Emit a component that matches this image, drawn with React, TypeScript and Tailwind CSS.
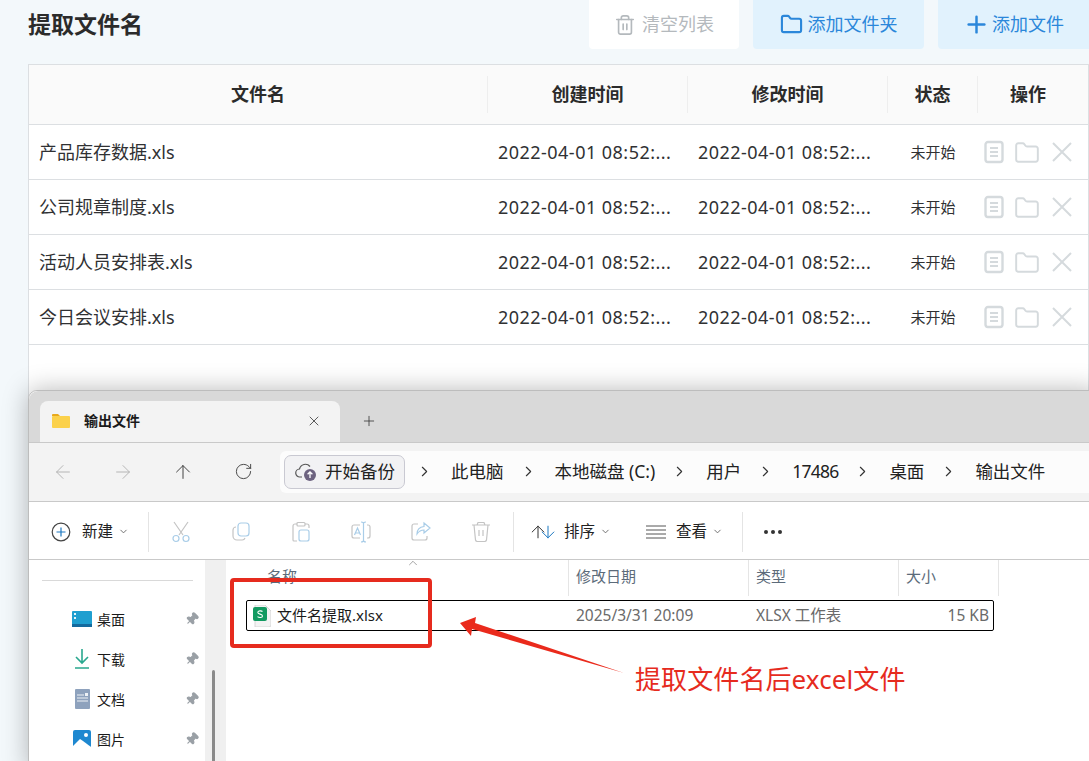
import { ArrowDown, ArrowLeft, ArrowRight, ArrowUp, ChevronDown, ChevronRight, ChevronUp, Folder, Pin, Plus, RotateCw, Trash2, X } from "lucide-react";

const FONT = "font-['Noto_Sans','Noto_Sans_CJK_SC',sans-serif]";

const rows = ["产品库存数据.xls", "公司规章制度.xls", "活动人员安排表.xls", "今日会议安排.xls"];
const crumbs = ["此电脑", "本地磁盘 (C:)", "用户", "17486", "桌面", "输出文件"];

function DocIcon() {
  return (
    <svg width="20" height="24" viewBox="0 0 20 24" fill="none" stroke="#d5dadd" strokeWidth="2.4">
      <rect x="1.5" y="2" width="17" height="20" rx="2.5" />
      <path d="M6 8h8M6 12h8M6 16h8" strokeWidth="1.8" />
    </svg>
  );
}

function TableRow({ name }: { name: string }) {
  return (
    <div className="grid h-[55px] grid-cols-[459px_200px_200px_90px_112px] items-center border-b border-[#dcdfe2] bg-white text-[18px] text-[#303133]">
      <div className="pl-[10px]">{name}</div>
      <div className="pl-[10px] tracking-[0.47px]">2022-04-01 08:52:...</div>
      <div className="pl-[10px] tracking-[0.47px]">2022-04-01 08:52:...</div>
      <div className="text-center text-[15px]">未开始</div>
      <div className="flex items-center pl-[6px]">
        <DocIcon />
        <Folder size={26} strokeWidth={1.8} color="#d5dadd" className="ml-[10px] mt-[1px]" />
        <svg width="20" height="20" viewBox="0 0 20 20" stroke="#d5dadd" strokeWidth="2" className="ml-[12px]">
          <path d="M1 1l18 18M19 1L1 19" />
        </svg>
      </div>
    </div>
  );
}

function HeadCell({ label, border = true }: { label: string; border?: boolean }) {
  return (
    <div className={`flex h-[37px] items-center justify-center text-[18px] font-bold text-[#2b2b2b] ${border ? "border-r border-[#eeeeee]" : "pr-[12px]"}`}>
      {label}
    </div>
  );
}

function Backup() {
  return (
    <div className="-mr-[5px] flex h-[34px] w-[121px] items-center gap-[6px] rounded-[7px] border border-[#c9c9d2] bg-[#f2f2f4] pl-[10px] text-[17.5px] text-[#222]">
      <svg width="24" height="22" viewBox="0 0 24 22" fill="none">
        <path d="M7 16H5a4 4 0 0 1-.5-8A6 6 0 0 1 15 5.5" stroke="#555" strokeWidth="1.2" />
        <circle cx="15" cy="14" r="6" fill="#6d6380" />
        <path d="M15 17v-6M12.6 13.2 15 11l2.4 2.2" stroke="#fff" strokeWidth="1.3" />
      </svg>
      开始备份
    </div>
  );
}

function ToolIcon({ children }: { children: React.ReactNode }) {
  return (
    <div className="flex w-[60px] justify-center">
      <svg width="22" height="22" viewBox="0 0 22 22" fill="none" strokeWidth="1.2">
        {children}
      </svg>
    </div>
  );
}

function Divider() {
  return <div className="h-[40px] w-px bg-[#e4e4e4]" />;
}

function SideItem({ icon, label }: { icon: React.ReactNode; label: string }) {
  return (
    <div className="flex h-[40px] items-center pl-[43px] text-[14px] text-[#1a1a1a]">
      <div className="flex w-[20px] justify-center">{icon}</div>
      <span className="ml-[5px] w-[88px]">{label}</span>
      <Pin size={14} fill="#9aa0a6" color="#9aa0a6" className="rotate-45" />
    </div>
  );
}

function Explorer() {
  return (
    <div className="absolute left-[28px] top-[390px] flex h-[380px] w-[1070px] flex-col rounded-tl-[9px] border border-[#bdbdbd] bg-white shadow-[0_0_26px_rgba(0,0,0,0.28)]">
      {/* tab strip */}
      <div className="flex h-[52px] items-end rounded-tl-[9px] border-b border-[#c9c9c9] bg-[#d9d9d9] pl-[11px]">
        <div className="flex h-[41px] w-[300px] items-center rounded-t-[8px] bg-[#f3f3f3] pb-[2px] pl-[12px] pr-[18px] text-[14px] font-bold text-[#1a1a1a]">
          <svg width="18" height="16" viewBox="0 0 18 16">
            <path d="M0 2a1 1 0 0 1 1-1h5l2 2H0z" fill="#e8a91c" />
            <rect y="3" width="18" height="12" rx="1" fill="#fbd14b" />
          </svg>
          <span className="ml-[14px] flex-1">输出文件</span>
          <X size={16} strokeWidth={1.2} color="#333" />
        </div>
        <Plus size={16} strokeWidth={1.2} color="#333" className="mb-[13px] ml-[21px]" />
      </div>

      {/* nav and address bar */}
      <div className="flex h-[59px] items-center border-b border-[#c9c9c9] bg-[#f3f3f3] pb-[1px] pl-[23px]">
        <ArrowLeft size={22} strokeWidth={1} color="#b0b0b0" />
        <ArrowRight size={22} strokeWidth={1} color="#b0b0b0" className="ml-[38px]" />
        <ArrowUp size={22} strokeWidth={1} color="#333" className="ml-[38px]" />
        <RotateCw size={19} strokeWidth={1.1} color="#333" className="ml-[40px]" />
        <div className="ml-[27px] flex h-[42px] flex-1 items-center rounded-l-[6px] bg-[#fcfcfc] pl-[4px] text-[17.5px] text-[#222]">
          <Backup />
          {crumbs.map((c) => (
            <div key={c} className="flex items-center">
              <ChevronRight size={17} strokeWidth={1.6} color="#333" className="ml-[16px] mr-[18px] shrink-0" />
              <span className={`whitespace-nowrap ${c === "17486" ? "tracking-[-0.8px]" : ""}`}>{c}</span>
            </div>
          ))}
        </div>
      </div>

      {/* command bar */}
      <div className="flex h-[58px] items-center border-b border-[#c9c9c9] bg-white pl-[22px] pt-[2px] text-[15.5px] text-[#222]">
        <svg width="20" height="20" viewBox="0 0 20 20" fill="none">
          <circle cx="10" cy="10" r="8.8" stroke="#444" strokeWidth="1.2" />
          <path d="M10 5.5v9M5.5 10h9" stroke="#1d78c1" strokeWidth="1.2" />
        </svg>
        <span className="ml-[11px]">新建</span>
        <ChevronDown size={11} color="#666" className="ml-[5px]" />
        <div className="ml-[19px]"><Divider /></div>
        <div className="ml-[2px] flex">
          <ToolIcon>
            <path d="M4 1l9 13M18 1L9 14" stroke="#c4c4c4" />
            <circle cx="6" cy="17.5" r="3" stroke="#a9cde8" />
            <circle cx="16" cy="17.5" r="3" stroke="#a9cde8" />
          </ToolIcon>
          <ToolIcon>
            <rect x="8" y="2" width="11" height="13" rx="3" stroke="#a9cde8" />
            <path d="M6 6a3 3 0 0 0-3 3v6a4 4 0 0 0 4 4h5a3 3 0 0 0 3-2" stroke="#c4c4c4" />
          </ToolIcon>
          <ToolIcon>
            <path d="M7 3H5a2 2 0 0 0-2 2v14a1 1 0 0 0 1 1h3M15 3h2a2 2 0 0 1 2 2v2" stroke="#c4c4c4" />
            <rect x="7" y="1.5" width="8" height="3.5" rx="1" stroke="#c4c4c4" />
            <rect x="9" y="9" width="10" height="11" rx="2" stroke="#a9cde8" />
          </ToolIcon>
          <ToolIcon>
            <path d="M10 4H4a2 2 0 0 0-2 2v9a2 2 0 0 0 2 2h6M17 4h1a2 2 0 0 1 2 2v9a2 2 0 0 1-2 2h-1" stroke="#c4c4c4" />
            <path d="M11 1c1 0 2 .5 2.5 1 .5-.5 1.5-1 2.500-1M13.500 2v18M11 21c1 0 2-.5 2.500-1 .5.500 1.500 1 2.500 1" stroke="#a9cde8" />
            <path d="M4.500 14 7.500 7l3 7M5.500 12h4" stroke="#a9cde8" />
          </ToolIcon>
          <ToolIcon>
            <path d="M8 3H4a2 2 0 0 0-2 2v12a2 2 0 0 0 2 2h11a2 2 0 0 0 2-2v-2" stroke="#c4c4c4" />
            <path d="M14 2l6 5-6 5V9c-3 0-5 1-7 4 0-5 3-7 7-7.500z" stroke="#a9cde8" />
          </ToolIcon>
          <ToolIcon>
            <path d="M2 4h18M7 4l1-2.500h6L15 4M4 4l1.500 15a2 2 0 0 0 2 1.500h7a2 2 0 0 0 2-1.500L18 4M9 9v6M13 9v6" stroke="#c4c4c4" />
          </ToolIcon>
        </div>
        <div className="ml-[2px]"><Divider /></div>
        <div className="ml-[14px] flex">
          <ArrowUp size={20} strokeWidth={1.2} color="#333" />
          <ArrowDown size={20} strokeWidth={1.2} color="#1d78c1" className="-ml-[10px]" />
        </div>
        <span className="ml-[6px]">排序</span>
        <ChevronDown size={11} color="#666" className="ml-[5px]" />
        <svg width="20" height="14" viewBox="0 0 20 14" stroke="#555" strokeWidth="1" className="ml-[35px]">
          <path d="M0 1h20M0 5h20M0 9h20M0 13h20" />
        </svg>
        <span className="ml-[10px]">查看</span>
        <ChevronDown size={11} color="#666" className="ml-[5px]" />
        <div className="ml-[19px]"><Divider /></div>
        <div className="ml-[21px] flex gap-[3px]">
          <div className="size-[4px] rounded-full bg-[#333]" />
          <div className="size-[4px] rounded-full bg-[#333]" />
          <div className="size-[4px] rounded-full bg-[#333]" />
        </div>
      </div>

      {/* body */}
      <div className="flex min-h-0 flex-1">
        <div className="w-[176px] shrink-0 bg-white pt-[38px]">
          <div className="relative -top-[18px] ml-[13px] mr-[12px] h-px bg-[#d9d9d9]" />
          <SideItem
            label="桌面"
            icon={
              <svg width="20" height="16" viewBox="0 0 20 16">
                <rect width="20" height="16" rx="1" fill="#1f9fd0" />
                <rect y="13" width="20" height="3" fill="#146a9e" />
                <rect x="2" y="2" width="2" height="2" fill="#e5f6fb" />
                <rect x="2" y="6" width="2" height="2" fill="#e5f6fb" />
              </svg>
            }
          />
          <SideItem
            label="下载"
            icon={
              <svg width="16" height="20" viewBox="0 0 16 20" fill="none" stroke="#2aa88f" strokeWidth="1.6">
                <path d="M8 0v14M2 8l6 6 6-6M1 19h14" />
              </svg>
            }
          />
          <SideItem
            label="文档"
            icon={
              <svg width="15" height="20" viewBox="0 0 15 20">
                <rect width="15" height="20" rx="1" fill="#8ea2bd" />
                <path d="M2 6h7M2 9h11M2 12h11" stroke="#eef2f6" strokeWidth="1" />
                <rect x="10" y="4" width="3" height="3" fill="#eef2f6" />
              </svg>
            }
          />
          <SideItem
            label="图片"
            icon={
              <svg width="18" height="18" viewBox="0 0 18 18">
                <rect width="18" height="18" rx="2" fill="#1e88d0" />
                <path d="M0 16l7-7 3 2 8 6v1H0z" fill="#fff" />
                <circle cx="13" cy="5" r="2" fill="#fff" />
              </svg>
            }
          />
        </div>
        <div className="flex w-[21px] shrink-0 justify-center border-r border-[#f0f0f0] bg-[#f0f0f0] pt-[110px]">
          <div className="ml-[-4px] h-full w-[3px] rounded-full bg-[#8a8a8a]" />
        </div>
        <div className="relative flex-1 pl-[20px]">
          <ChevronUp size={14} strokeWidth={1} color="#666" className="absolute left-[180px] top-[-4px]" />
          <div className="grid h-[36px] grid-cols-[323px_180px_150px_100px] items-center text-[15px] text-[#5c6b7a]">
            <div className="flex h-full items-center border-r border-[#e5e5e5] pb-[4px] pl-[21px]">名称</div>
            <div className="flex h-full items-center border-r border-[#e5e5e5] pb-[4px] pl-[7px]">修改日期</div>
            <div className="flex h-full items-center border-r border-[#e5e5e5] pb-[4px] pl-[7px]">类型</div>
            <div className="flex h-full items-center border-r border-[#e5e5e5] pb-[4px] pl-[7px]">大小</div>
          </div>
          <div className="mt-[4px] grid h-[31px] w-[748px] grid-cols-[321px_180px_150px_95px] items-center rounded-[2px] border border-black text-[15.5px] text-[#6a6a6a]">
            <div className="flex items-center pl-[6px] text-[15px] text-[#1a1a1a]">
              <svg width="18" height="22" viewBox="0 0 18 22">
                <path d="M2 0h10l6 6v14a2 2 0 0 1-2 2H2z" fill="#f3f3f3" stroke="#d6d6d6" />
                <rect y="2" width="14" height="14" rx="2" fill="#129a61" />
                <path d="M9.500 6.500C8.500 5.500 4.800 5.500 4.800 7.500c0 2.300 4.700 1 4.700 3.500 0 2-3.700 1.800-5 .7" fill="none" stroke="#fff" strokeWidth="1.100" />
              </svg>
              <span className="ml-[6px]">文件名提取.xlsx</span>
            </div>
            <div className="pl-[8px]">2025/3/31 20:09</div>
            <div className="pl-[8px]">XLSX 工作表</div>
            <div className="pr-[4px] text-right">15 KB</div>
          </div>
        </div>
      </div>
    </div>
  );
}

export default function App() {
  return (
    <div className={`relative h-[761px] w-[1089px] overflow-hidden bg-[#f3f8fb] ${FONT}`}>
      {/* toolbar */}
      <div className="flex h-[64px] items-start pl-[28px]">
        <h1 className="mt-[5px] flex-1 text-[23px] font-bold leading-[38px] text-[#2b2b2b]">提取文件名</h1>
        <div className="flex gap-[14px] text-[18px]">
          <button className="flex h-[49px] w-[150px] items-center justify-center gap-[6px] rounded-b-[4px] bg-white text-[#b4b9bd]">
            <Trash2 size={22} strokeWidth={1.8} color="#b4b9bd" />
            清空列表
          </button>
          <button className="flex h-[49px] w-[171px] items-center justify-center gap-[5px] rounded-b-[4px] bg-[#e1f2fd] text-[#2b87da]">
            <Folder size={23} strokeWidth={2.2} color="#2b87da" />
            添加文件夹
          </button>
          <button className="flex h-[49px] w-[151px] items-center justify-center gap-[2px] rounded-bl-[4px] bg-[#e1f2fd] text-[#2b87da]">
            <Plus size={27} strokeWidth={2.2} color="#2b87da" />
            添加文件
          </button>
        </div>
      </div>

      {/* file table */}
      <div className="ml-[28px] h-[341px] border border-[#dcdfe2] bg-white">
        <div className="grid h-[60px] grid-cols-[459px_200px_200px_90px_112px] items-center border-b border-[#dcdfe2] bg-[#fafafa]">
          <HeadCell label="文件名" />
          <HeadCell label="创建时间" />
          <HeadCell label="修改时间" />
          <HeadCell label="状态" />
          <HeadCell label="操作" border={false} />
        </div>
        {rows.map((r) => (
          <TableRow key={r} name={r} />
        ))}
      </div>

      <Explorer />

      {/* red annotation */}
      <div className="absolute left-[230px] top-[578px] h-[70px] w-[202px] rounded-[4px] border-[4px] border-[#e62b1e]" />
      <svg className="absolute left-[455px] top-[610px]" width="175" height="70" viewBox="0 0 175 70">
        <polygon points="5,13 21,7 20,13 169,63 17,19 16,26" fill="#ea2a1c" />
      </svg>
      <div className="absolute left-[635px] top-[660px] whitespace-nowrap text-[26px] leading-[38px] tracking-[0.1px] text-[#e62b1e]">提取文件名后excel文件</div>
    </div>
  );
}
